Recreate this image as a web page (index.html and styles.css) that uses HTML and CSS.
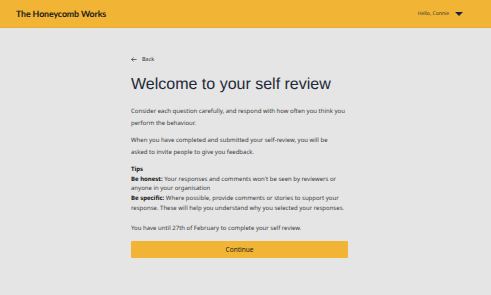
FILE: index.html
```html
<!DOCTYPE html>
<html lang="en">
<head>
    <meta charset="UTF-8">
    <meta name="viewport" content="width=device-width, initial-scale=1.0">
    <title>Self review | The Honeycomb Works</title>
    <link rel="stylesheet" href="styles.css">
</head>
<body>
    <header class="topbar">
        <div class="brand">The Honeycomb Works</div>
        <div class="user">
            <span class="user-name">Hello, Connie</span>
            <span class="caret"></span>
        </div>
    </header>

    <main class="content">
        <a href="#" class="back">
            <svg width="6" height="5" viewBox="0 0 6 5"><path d="M5.6 2.5H0.6M2.6 0.5L0.6 2.5L2.6 4.5" fill="none" stroke="#333" stroke-width="0.7"/></svg>
            <span>Back</span>
        </a>

        <h1 class="title">Welcome to your self review</h1>

        <p class="text">Consider each question carefully, and respond with how often you think you perform the behaviour.</p>
        <p class="text">When you have completed and submitted your self-review, you will be<br>asked to invite people to give you feedback.</p>

        <div class="tips">
            <p class="tips-title">Tips</p>
            <p><b>Be honest:</b> Your responses and comments won't be seen by reviewers or anyone in your organisation</p>
            <p><b>Be specific:</b> Where possible, provide comments or stories to support your response. These will help you understand why you selected your responses.</p>
        </div>

        <p class="text deadline">You have until 27th of February to complete your self review.</p>

        <button class="continue">Continue</button>
    </main>
</body>
</html>
```

FILE: styles.css
```css
* {
    margin: 0;
    padding: 0;
    box-sizing: border-box;
}
body {
    font-family: 'Noto Sans', 'Open Sans', sans-serif;
    background: #e5e5e5;
    color: #383838;
    text-rendering: geometricPrecision;
}
.topbar {
    height: 28px;
    background: #f1b434;
    border-bottom: 1px solid #e6ac33;
    display: flex;
    align-items: center;
    justify-content: space-between;
    padding: 0 28px 0 16px;
}
.brand {
    font-family: 'Lato', sans-serif;
    font-weight: 700;
    font-size: 8.8px;
    letter-spacing: -0.1px;
    color: #1b1b1b;
}
.user {
    display: flex;
    align-items: center;
    gap: 6px;
}
.user-name {
    font-size: 5px;
    color: #333;
}
.caret {
    width: 0;
    height: 0;
    border-left: 4px solid transparent;
    border-right: 4px solid transparent;
    border-top: 4px solid #1c2538;
}
.content {
    padding: 26px 143px 0 131px;
}
.back {
    display: flex;
    align-items: center;
    gap: 5px;
    height: 10px;
    font-size: 5.5px;
    color: #333;
    text-decoration: none;
}
.title {
    font-family: 'Liberation Sans', Arial, sans-serif;
    font-weight: 400;
    font-size: 16px;
    line-height: 19px;
    color: #1f2937;
    margin: 11px 0 12px;
}
.text {
    font-size: 6px;
    line-height: 11.5px;
    margin-bottom: 6px;
}
.tips {
    font-size: 6px;
    line-height: 9.7px;
    margin-top: 7px;
    margin-bottom: 9px;
}
.tips b,
.tips-title {
    font-weight: 700;
    color: #111;
}
.deadline {
    margin-bottom: 7px;
}
.continue {
    display: block;
    width: 100%;
    height: 17px;
    background: #f1b434;
    border: none;
    border-radius: 1px;
    font-family: 'Noto Sans', sans-serif;
    font-size: 6.5px;
    color: #222;
}
```
